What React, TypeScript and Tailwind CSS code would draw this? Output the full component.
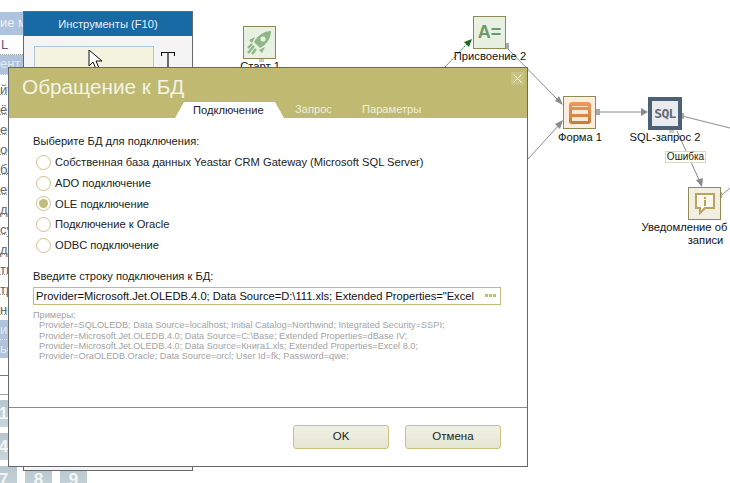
import React from "react";

const sideRows = [
  { t: "ие м", k: "head" },
  { t: "L", k: "link" },
  { t: "ент", k: "blue" },
  { t: "йт", k: "row" },
  { t: "ё г", k: "row" },
  { t: "ер", k: "row" },
  { t: "ое", k: "row" },
  { t: "бл", k: "row" },
  { t: "ен", k: "row" },
  { t: "да", k: "row" },
  { t: "су", k: "row" },
  { t: "ди", k: "row" },
  { t: "ти", k: "row" },
  { t: "тр", k: "row" },
  { t: "не", k: "row" },
];

function Side() {
  return (
    <div className="absolute left-0 top-[12px] w-[23px] flex flex-col text-[13px] overflow-hidden">
      {sideRows.map((r, i) => (
        <div
          key={i}
          className={
            r.k === "head"
              ? "h-[23px] bg-[#afc3dd] text-[#eef2f8] leading-[21px] whitespace-nowrap"
              : r.k === "blue"
              ? "h-[20px] bg-[#afc3dd] text-[#e4eaf3] leading-[18px] border-b border-dotted border-[#e8eef6] whitespace-nowrap"
              : r.k === "link"
              ? "h-[20px] text-[#7a4f7f] leading-[20px] pl-[1px] border-b border-dotted border-[#999] whitespace-nowrap"
              : "h-[20px] text-[#5f6470] pt-[9px] leading-[12px] border-b border-dotted border-[#999] whitespace-nowrap"
          }
        >
          {r.t}
        </div>
      ))}
      <div className="h-[5px]" />
      <div className="h-[20px] bg-[#afc3dd] text-[#e4eaf3] leading-[20px] border-b border-dotted border-[#e8eef6] whitespace-nowrap">ии</div>
      <div className="h-[18px] bg-[#afc3dd] text-[#e4eaf3] leading-[18px] whitespace-nowrap">ьо</div>
      <div className="h-[18px] border-b border-[#6b7f88]" />
      <div className="h-[19px] border-b border-[#9aa5aa]" />
    </div>
  );
}

function Tile({ n }: { n: string }) {
  return (
    <div className="w-[27px] h-[27px] bg-gradient-to-b from-[#b7c7ce] to-[#c9d6db] text-[#f3f6f7] text-[17px] font-bold flex items-center justify-center leading-none">
      {n}
    </div>
  );
}

function Tiles() {
  return (
    <div className="absolute left-[-10px] top-[400px] grid grid-cols-[27px_27px_27px] gap-x-[8px] gap-y-[6px]">
      {["1", "2", "3", "4", "5", "6", "7", "8", "9"].map((n) => (
        <Tile key={n} n={n} />
      ))}
    </div>
  );
}

function Tools() {
  return (
    <div className="absolute left-[23px] top-[11px] w-[170px] h-[460px] border border-[#66696c] bg-[#f4f4f4] flex flex-col">
      <div className="h-[24px] bg-[#186aa5] text-[#e8f0f7] text-[11.2px] flex items-center justify-center shrink-0">
        Инструменты (F10)
      </div>
      <div className="flex items-start pl-[10px] pt-[10px] gap-[7px]">
        <div className="relative w-[120px] h-[40px] bg-[#f3f3e0] border border-[#aec5de]">
          <svg className="absolute left-[53px] top-[2px]" width="16" height="22" viewBox="0 0 16 22">
            <path d="M1 1 L1 17 L5 13 L8 20 L11 19 L8 12 L14 12 Z" fill="#fff" stroke="#111" strokeWidth="1" />
          </svg>
        </div>
        <svg width="14" height="18" viewBox="0 0 14 18" className="mt-[6px]">
          <path d="M0.5 4 V0.5 H13.5 V4 M7 0.5 V17" fill="none" stroke="#111" strokeWidth="1.2" />
        </svg>
      </div>
    </div>
  );
}

function Wires() {
  const g = "#8a8a8a";
  return (
    <svg className="absolute left-0 top-0" width="730" height="483" viewBox="0 0 730 483">
      <line x1="445" y1="67" x2="468" y2="43" stroke="#2e7d32" strokeWidth="1" strokeDasharray="2 1" />
      <polygon points="472,39 464,42 469,47" fill="#1f6b25" />
      <line x1="506" y1="47" x2="560" y2="102" stroke={g} strokeWidth="1" />
      <polygon points="563,105 555,101 559,96" fill={g} />
      <line x1="528" y1="159" x2="560" y2="124" stroke={g} strokeWidth="1" />
      <polygon points="563,120 555,124 560,129" fill={g} />
      <line x1="597" y1="112" x2="642" y2="112" stroke={g} strokeWidth="1" />
      <polygon points="648,112 641,108 641,116" fill={g} />
      <line x1="682" y1="116" x2="730" y2="128" stroke={g} strokeWidth="1" />
      <line x1="677" y1="131" x2="700" y2="182" stroke={g} strokeWidth="1" />
      <polygon points="702,187 696,180 703,178" fill={g} />
      <line x1="722" y1="195" x2="730" y2="188" stroke={g} strokeWidth="1" />
      <rect x="504" y="43" width="5" height="6" fill="#a9a9a9" />
      <rect x="596" y="109" width="4" height="6" fill="#a9a9a9" />
      <rect x="680" y="113" width="4" height="6" fill="#a9a9a9" />
      <rect x="719" y="192" width="3" height="6" fill="#a9a9a9" />
      <rect x="669" y="130" width="5" height="3" fill="#c9c9c9" />
      <rect x="259" y="59" width="5" height="3" fill="#c9c9c9" />
    </svg>
  );
}

const nodeBase = "absolute w-[33px] h-[33px] flex items-center justify-center";
const label = "absolute text-[11.2px] leading-[14px] text-[#111] text-center whitespace-nowrap -translate-x-1/2";

function Nodes() {
  return (
    <>
      <div className={`${nodeBase} left-[243px] top-[26px] bg-[#e8f0e2] border border-[#8c8a55]`}>
        <svg width="27" height="27" viewBox="0 0 27 27">
          <path d="M25 2 C18 2 12 6 8 13 L14 19 C21 15 25 9 25 2 Z" fill="#8fb687" />
          <circle cx="17" cy="10" r="2.6" fill="#e8f0e2" />
          <path d="M9 8 L3 11 L6 14 Z M19 18 L16 24 L13 21 Z" fill="#8fb687" />
          <path d="M8 17 L2 24 M10 20 L6 25 M6 15 L2 19" stroke="#8fb687" strokeWidth="2.4" fill="none" />
        </svg>
      </div>
      <div className={`${label} left-[260px] top-[59px]`}>Старт 1</div>

      <div className={`${nodeBase} left-[473px] top-[16px] bg-[#e8f0e2] border border-[#8c8a55] text-[#6c9a68] text-[18px] font-bold`}>
        A=
      </div>
      <div className={`${label} left-[490px] top-[49px]`}>Присвоение 2</div>

      <div className={`${nodeBase} left-[563px] top-[96px] bg-[#fbeee0] border border-[#8c8a55]`}>
        <div className="w-[22px] h-[22px] rounded-[3px] bg-gradient-to-b from-[#ee9a5c] to-[#c47c38] flex flex-col gap-[1px] pt-[4px] items-center">
          <div className="w-[16px] h-[3px] border-t border-[#f6dfc8]" />
          <div className="w-[16px] h-[4px] bg-[#f8e8d6]" />
          <div className="h-[1px]" />
          <div className="w-[16px] h-[4px] bg-[#f8e8d6]" />
        </div>
      </div>
      <div className={`${label} left-[580px] top-[130px]`}>Форма 1</div>

      <div className={`${nodeBase} left-[648px] top-[97px] w-[34px] bg-[#e9ebee] border-[4px] border-[#4b6175] text-[#5f6b78] text-[13px] font-bold tracking-[-0.7px] [font-family:'DejaVu_Sans_Mono',monospace]`}>
        SQL
      </div>
      <div className={`${label} left-[665px] top-[130px]`}>SQL-запрос 2</div>

      <div className="absolute left-[665px] top-[151px] h-[12px] w-[41px] bg-[#fffff0] border border-[#d6d6d6] text-[10px] leading-[10px] text-[#222] text-center">
        Ошибка
      </div>

      <div className={`${nodeBase} left-[688px] top-[187px] bg-[#f3efe0] border border-[#8c8a55]`}>
        <svg width="22" height="23" viewBox="0 0 22 23">
          <path d="M2 2 H20 V16 H11 L6 21 V16 H2 Z" fill="#fbf8ec" stroke="#b9a35f" strokeWidth="2" />
          <rect x="10" y="5" width="2" height="2" fill="#b9a35f" />
          <rect x="10" y="8" width="2" height="6" fill="#b9a35f" />
        </svg>
      </div>
      <div className="absolute left-[641px] top-[221px] w-[129px] text-[11.2px] leading-[12.5px] text-[#111] text-center">
        Уведомление об ошибке записи
      </div>
    </>
  );
}

function Radio({ text, checked }: { text: string; checked?: boolean }) {
  return (
    <div className="h-[20.8px] flex items-center gap-[4px] pl-[3px]">
      <span className="w-[15px] h-[15px] rounded-full border border-[#c9c48c] bg-white flex items-center justify-center shrink-0">
        {checked && <span className="w-[9px] h-[9px] rounded-full bg-[#c2bc7a]" />}
      </span>
      <span className="text-[11.15px] text-[#222]">{text}</span>
    </div>
  );
}

function Button({ text }: { text: string }) {
  return (
    <div className="w-[96px] h-[24px] rounded-[3px] border border-[#c9c27e] bg-gradient-to-b from-[#f0f1e3] to-[#e4e6d3] text-[11.5px] text-[#222] flex items-center justify-center">
      {text}
    </div>
  );
}

function Dialog() {
  return (
    <div className="absolute left-[8px] top-[67px] w-[520px] h-[400px] border border-[#66696c] bg-white flex flex-col">
      <div className="h-[50px] bg-[#bfb972] flex flex-col justify-between shrink-0 relative">
        <div className="pl-[13px] pt-[5px] text-[#f5f3e3] text-[20.75px] leading-[28px]">Обращение к БД</div>
        <div className="flex items-end text-[11.15px] h-[16px] pl-[166px]">
          <div className="w-[109px] h-[16px] bg-white text-[#222] pl-[18px] leading-[17px] [clip-path:polygon(9px_0,calc(100%-9px)_0,100%_100%,0_100%)]">
            Подключение
          </div>
          <div className="ml-[11px] text-[#f0eedd] leading-[17px]">Запрос</div>
          <div className="ml-[30px] text-[#f0eedd] leading-[17px]">Параметры</div>
        </div>
        <div className="absolute right-[3px] top-[4px] w-[13px] h-[13px] bg-[#c8c384] flex items-center justify-center">
          <svg width="9" height="9" viewBox="0 0 9 9">
            <path d="M0.5 0.5 L8.5 8.5 M8.5 0.5 L0.5 8.5" stroke="#fff" strokeWidth="1" />
          </svg>
        </div>
      </div>

      <div className="flex-1 pl-[24px] pr-[26px] pt-[15px]">
        <div className="text-[11.15px] leading-[16px] text-[#222]">Выберите БД для подключения:</div>
        <div className="mt-[3px] flex flex-col">
          <Radio text="Собственная база данных Yeastar CRM Gateway (Microsoft SQL Server)" />
          <Radio text="ADO подключение" />
          <Radio text="OLE подключение" checked />
          <Radio text="Подключение к Oracle" />
          <Radio text="ODBC подключение" />
        </div>
        <div className="mt-[12px] text-[11.15px] leading-[16px] text-[#222]">Введите строку подключения к БД:</div>
        <div className="mt-[3px] h-[18px] border border-[#c2bc7a] flex items-center pl-[2px] pr-[3px] gap-[7px]">
          <span className="flex-1 overflow-hidden whitespace-nowrap text-[11.15px] leading-[16px] text-[#111]">
            Provider=Microsoft.Jet.OLEDB.4.0; Data Source=D:\111.xls; Extended Properties="Excel 8.0;HDR=Yes"
          </span>
          <span className="flex gap-[1px] w-[13px] shrink-0 justify-center">
            <i className="w-[3px] h-[3px] bg-[#c2bc7a]" />
            <i className="w-[3px] h-[3px] bg-[#c2bc7a]" />
            <i className="w-[3px] h-[3px] bg-[#c2bc7a]" />
          </span>
        </div>
        <div className="mt-[5px] text-[9.2px] leading-[10.3px] text-[#a3a3a3] whitespace-nowrap">
          <div>Примеры:</div>
          <div className="pl-[6px]">Provider=SQLOLEDB; Data Source=localhost; Initial Catalog=Northwind; Integrated Security=SSPI;</div>
          <div className="pl-[6px]">Provider=Microsoft.Jet.OLEDB.4.0; Data Source=C:\Base; Extended Properties=dBase IV;</div>
          <div className="pl-[6px]">Provider=Microsoft.Jet.OLEDB.4.0; Data Source=Книга1.xls; Extended Properties=Excel 8.0;</div>
          <div className="pl-[6px]">Provider=OraOLEDB.Oracle; Data Source=orcl; User Id=fk; Password=qwe;</div>
        </div>
      </div>

      <div className="h-[59px] border-t border-[#8a8a8a] flex items-center justify-end gap-[16px] pr-[26px] pb-[1px] shrink-0">
        <Button text="OK" />
        <Button text="Отмена" />
      </div>
    </div>
  );
}

export default function App() {
  return (
    <div className="relative w-[730px] h-[483px] overflow-hidden bg-white [font-family:'Liberation_Sans',Arial,sans-serif]">
      <Side />
      <Tiles />
      <Wires />
      <Nodes />
      <Tools />
      <Dialog />
    </div>
  );
}
